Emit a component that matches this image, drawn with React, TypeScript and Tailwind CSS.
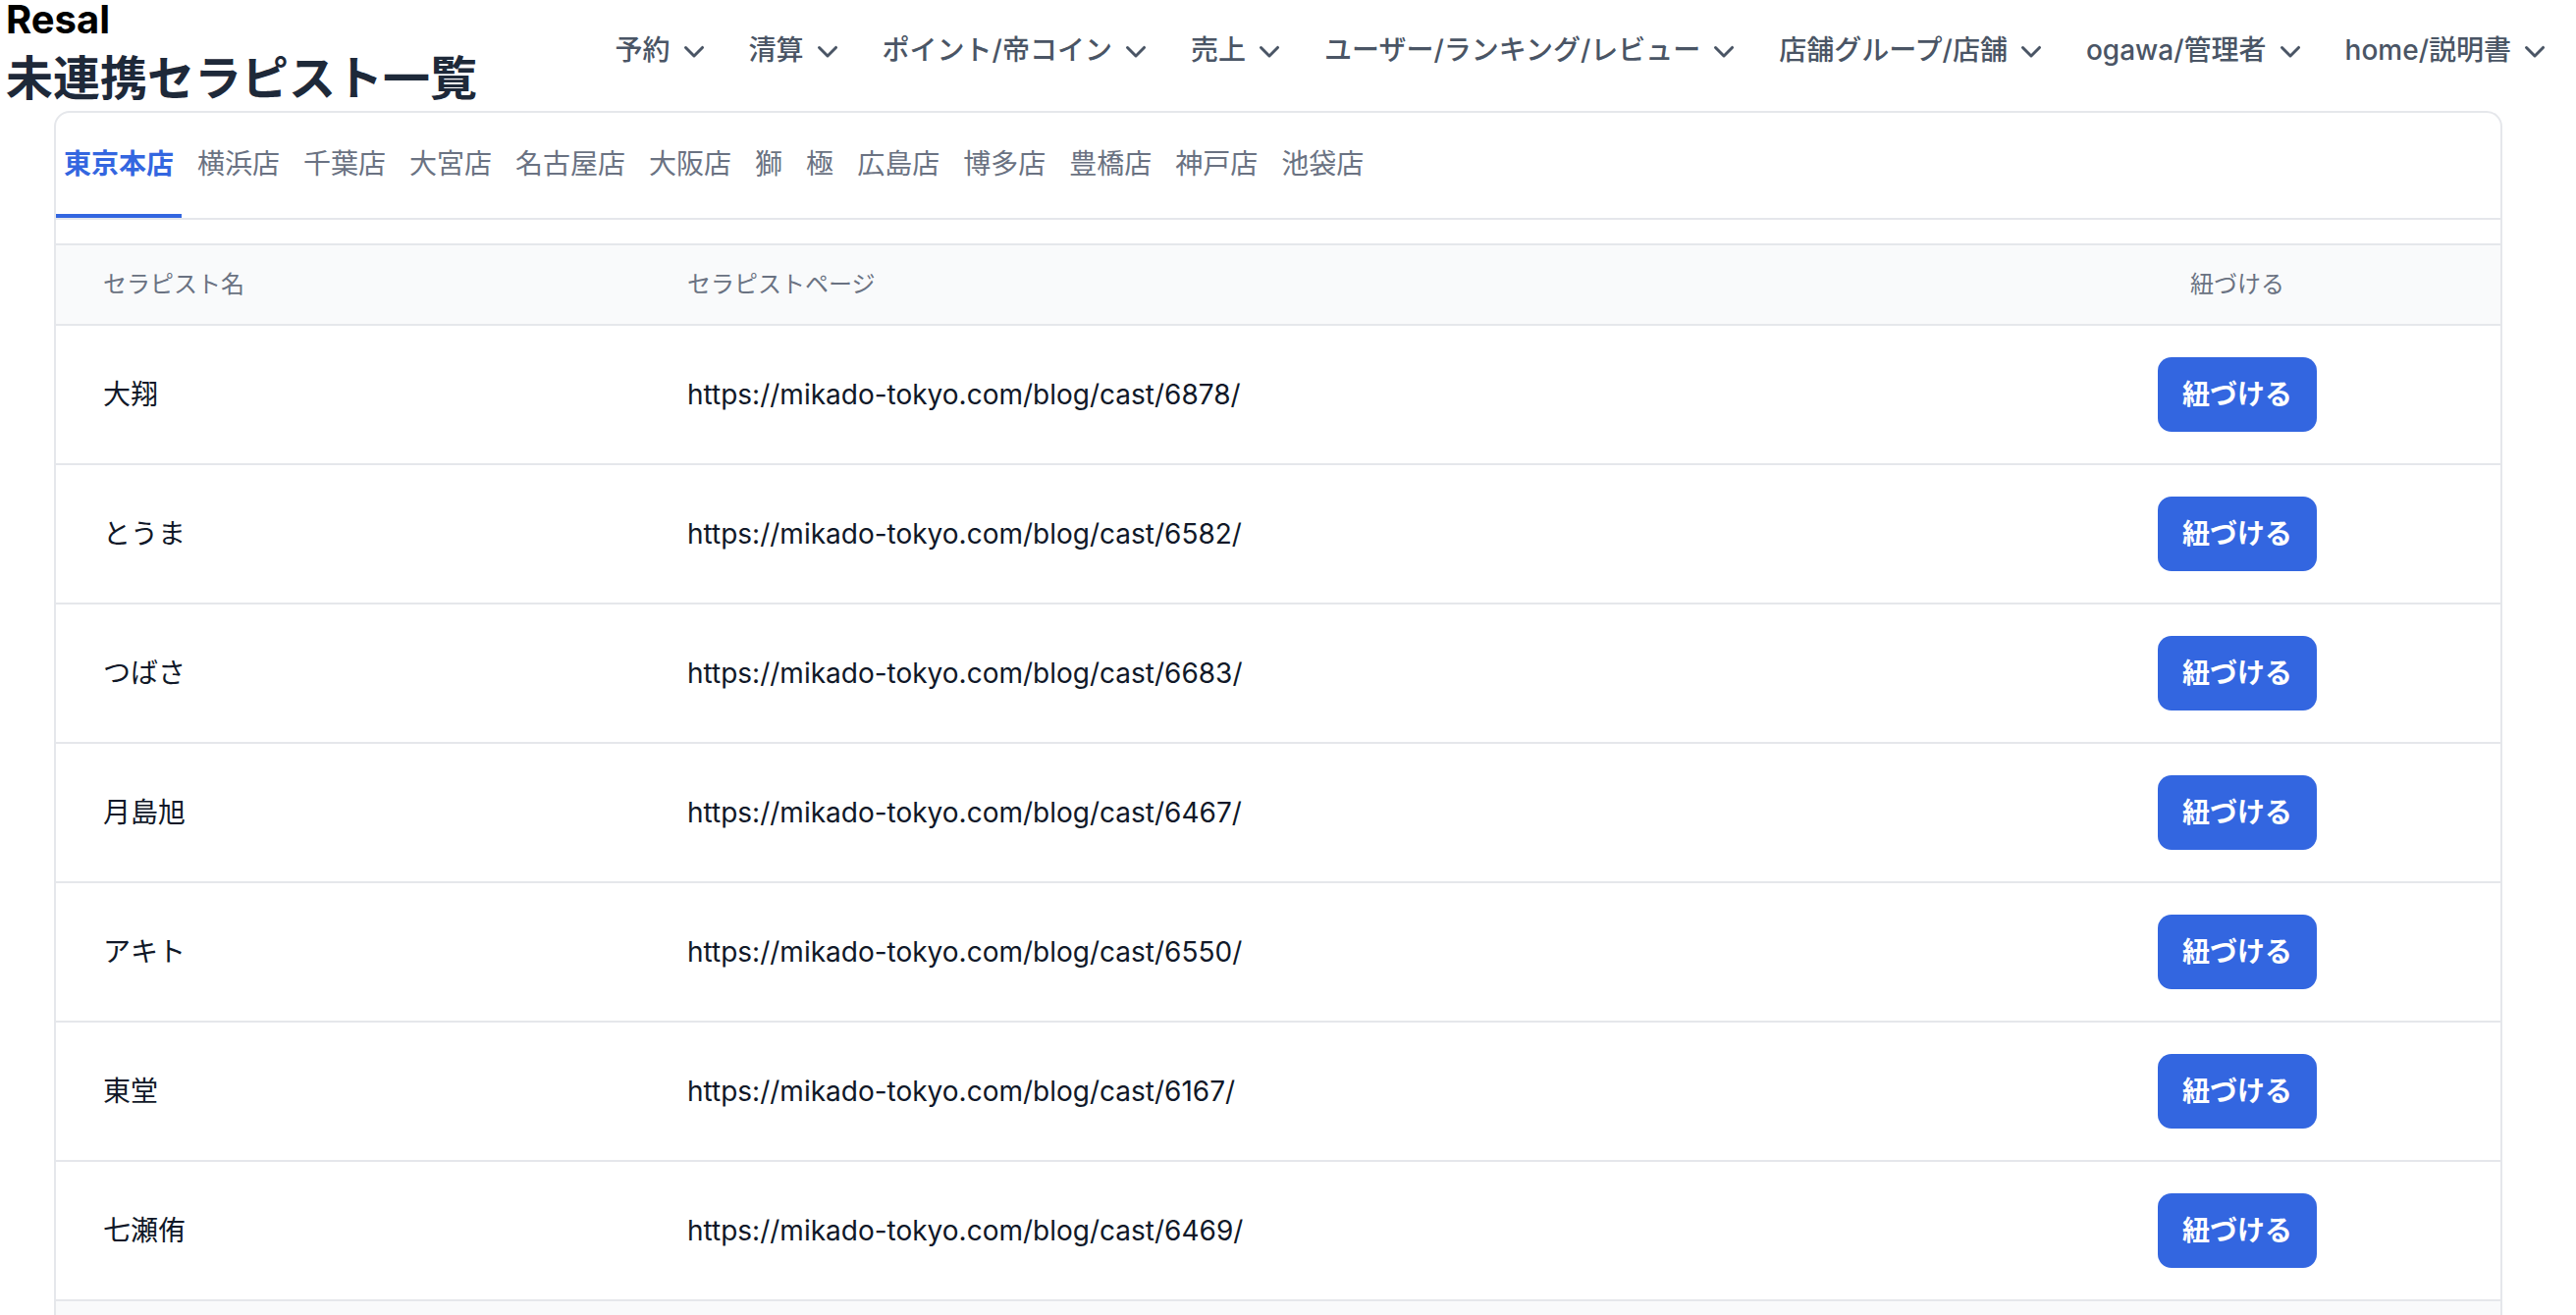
import React from "react";

const NAV = [
  "予約",
  "清算",
  "ポイント/帝コイン",
  "売上",
  "ユーザー/ランキング/レビュー",
  "店舗グループ/店舗",
  "ogawa/管理者",
  "home/説明書",
];

const SHOPS = [
  "東京本店", "横浜店", "千葉店", "大宮店", "名古屋店", "大阪店", "獅",
  "極", "広島店", "博多店", "豊橋店", "神戸店", "池袋店",
];

const ROWS = [
  { name: "大翔", id: "6878" },
  { name: "とうま", id: "6582" },
  { name: "つばさ", id: "6683" },
  { name: "月島旭", id: "6467" },
  { name: "アキト", id: "6550" },
  { name: "東堂", id: "6167" },
  { name: "七瀬侑", id: "6469" },
];

function Chevron() {
  return (
    <svg viewBox="0 0 20 20" fill="currentColor" className="w-[40px] h-[40px] ml-[4px]">
      <path
        fillRule="evenodd"
        d="M5.22 8.22a.75.75 0 0 1 1.06 0L10 11.94l3.72-3.72a.75.75 0 1 1 1.06 1.06l-4.25 4.25a.75.75 0 0 1-1.06 0L5.22 9.28a.75.75 0 0 1 0-1.06Z"
        clipRule="evenodd"
      />
    </svg>
  );
}

export default function App() {
  return (
    <div className="min-h-screen bg-white font-['Inter','Noto_Sans_CJK_JP',sans-serif]">
      {/* header */}
      <header className="flex items-start justify-between">
        <div className="pl-[6px]">
          <div className="text-[40px] leading-[40px] font-bold text-black">Resal</div>
          <h1 className="mt-[8px] text-[48px] leading-[64px] font-bold text-gray-800">
            未連携セラピスト一覧
          </h1>
        </div>

        <nav className="flex h-[102px] items-center gap-[36px] pr-[22px]">
          {NAV.map(n => (
            <button key={n} className="flex items-center text-[28px] font-medium text-gray-600">
              <span>{n}</span>
              <Chevron />
            </button>
          ))}
        </nav>
      </header>

      {/* card */}
      <section className="mt-[1px] ml-[55px] w-[2494px] border-2 border-gray-200 rounded-[16px] overflow-hidden">
        <div className="flex gap-[8px] border-b-2 border-gray-200">
          {SHOPS.map((s, i) => (
            <div
              key={s}
              className={`h-[107px] px-[8px] flex items-center border-b-4 text-[28px]
                ${i === 0
                  ? "border-[#3366e0] text-[#3366e0] font-bold"
                  : "border-transparent text-gray-500"}`}
            >
              {s}
            </div>
          ))}
        </div>

        <div className="mt-[24px] border-t-2 border-gray-200">
          <div className="grid grid-cols-[595px_1fr_536px] h-[82px] items-center bg-gray-50 border-b-2 border-gray-200 text-[24px] text-gray-500">
            <div className="pl-[48px]">セラピスト名</div>
            <div className="pl-[48px]">セラピストページ</div>
            <div className="text-center">紐づける</div>
          </div>

          {ROWS.map(r => (
            <div
              key={r.id}
              className="grid grid-cols-[595px_1fr_536px] h-[142px] items-center border-b-2 border-gray-200 text-[28px] text-gray-900"
            >
              <div className="pl-[48px]">{r.name}</div>
              <div className="pl-[48px]">https://mikado-tokyo.com/blog/cast/{r.id}/</div>
              <div className="flex justify-center">
                <button className="w-[162px] h-[76px] rounded-[14px] bg-[#3366e0] text-white font-bold text-[28px]">
                  紐づける
                </button>
              </div>
            </div>
          ))}

          <div className="h-[82px] bg-gray-50" />
        </div>
      </section>
    </div>
  );
}
